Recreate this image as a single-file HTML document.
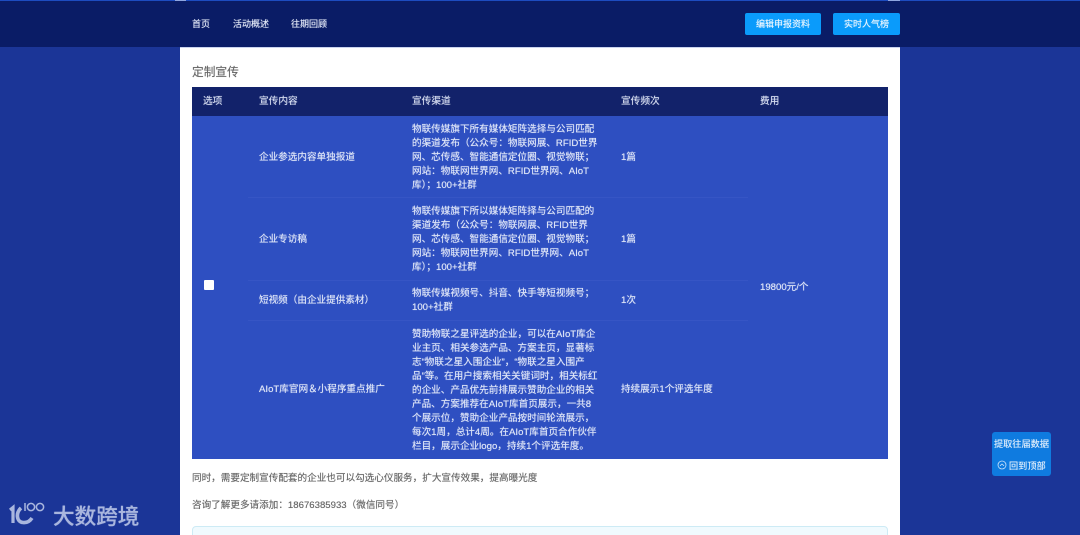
<!DOCTYPE html>
<html lang="zh">
<head>
<meta charset="utf-8">
<style>
html,body{margin:0;padding:0;width:1080px;height:535px;overflow:hidden;background:#1b3597;}
body{position:relative;font-family:"Liberation Sans","Noto Sans CJK SC",sans-serif;}
.a{position:absolute;white-space:nowrap;}
#hdr{left:0;top:0;width:1080px;height:47px;background:#0a1c66;border-top:1px solid #1d4cc0;box-sizing:border-box;}
#main{left:180px;top:47px;width:720px;height:488px;background:#fff;border-top:1px solid #c9d3ee;box-sizing:border-box;}
.nav{top:18px;font-size:9px;line-height:13px;color:#dfe5f5;text-shadow:0 0 .6px #dfe5f5;}
.btn{top:13px;height:22px;background:#0a9bfb;border-radius:2px;color:#e6f4ff;font-size:9px;line-height:23px;text-align:center;text-shadow:0 0 .6px #e6f4ff;}
#th{left:192px;top:87px;width:696px;height:29px;background:#12226a;}
#tb{left:192px;top:116px;width:696px;height:343px;background:#2e4fc1;}
.h{top:95px;font-size:9.7px;line-height:14px;color:#d5dcf0;text-shadow:0 0 .6px #d5dcf0;}
.t{font-size:9.6px;line-height:14px;color:#dde4f7;text-shadow:0 0 .6px #dde4f7;}
.line{left:248px;width:500px;height:1px;background:#3655c5;}
.p{left:192px;font-size:9.6px;line-height:13px;color:#666;text-shadow:0 0 .5px #888;}
</style>
</head>
<body>
<div class="a" id="hdr"></div>
<div class="a" style="left:175px;top:0;width:11px;height:1px;background:#8fa6e0"></div>
<div class="a" style="left:888px;top:0;width:12px;height:1px;background:#8fa6e0"></div>
<div class="a nav" style="left:192px">首页</div>
<div class="a nav" style="left:233px">活动概述</div>
<div class="a nav" style="left:291px">往期回顾</div>
<div class="a btn" style="left:745px;width:76px">编辑申报资料</div>
<div class="a btn" style="left:833px;width:67px">实时人气榜</div>

<div class="a" id="main"></div>
<div class="a" style="left:192px;top:65px;font-size:11.7px;line-height:16px;color:#666;text-shadow:0 0 .5px #888">定制宣传</div>

<div class="a" id="th"></div>
<div class="a" id="tb"></div>
<div class="a h" style="left:203px">选项</div>
<div class="a h" style="left:259px">宣传内容</div>
<div class="a h" style="left:412px">宣传渠道</div>
<div class="a h" style="left:621px">宣传频次</div>
<div class="a h" style="left:760px">费用</div>

<div class="a line" style="top:197px"></div>
<div class="a line" style="top:280px"></div>
<div class="a line" style="top:320px"></div>

<div class="a" style="left:204px;top:280px;width:10px;height:10px;background:#fff;border-radius:1px"></div>

<div class="a t" style="left:259px;top:151px">企业参选内容单独报道</div>
<div class="a t" style="left:259px;top:233px">企业专访稿</div>
<div class="a t" style="left:259px;top:294px">短视频（由企业提供素材）</div>
<div class="a t" style="left:259px;top:383px">AIoT库官网＆小程序重点推广</div>

<div class="a t" style="left:412px;top:123px">物联传媒旗下所有媒体矩阵选择与公司匹配<br>的渠道发布（公众号：物联网展、RFID世界<br>网、芯传感、智能通信定位圈、视觉物联；<br>网站：物联网世界网、RFID世界网、AIoT<br>库）；100+社群</div>
<div class="a t" style="left:412px;top:205px">物联传媒旗下所以媒体矩阵择与公司匹配的<br>渠道发布（公众号：物联网展、RFID世界<br>网、芯传感、智能通信定位圈、视觉物联；<br>网站：物联网世界网、RFID世界网、AIoT<br>库）；100+社群</div>
<div class="a t" style="left:412px;top:287px">物联传媒视频号、抖音、快手等短视频号；<br>100+社群</div>
<div class="a t" style="left:412px;top:328px">赞助物联之星评选的企业，可以在AIoT库企<br>业主页、相关参选产品、方案主页，显著标<br>志“物联之星入围企业”，“物联之星入围产<br>品”等。在用户搜索相关关键词时，相关标红<br>的企业、产品优先前排展示赞助企业的相关<br>产品、方案推荐在AIoT库首页展示，一共8<br>个展示位，赞助企业产品按时间轮流展示，<br>每次1周，总计4周。在AIoT库首页合作伙伴<br>栏目，展示企业logo，持续1个评选年度。</div>

<div class="a t" style="left:621px;top:151px">1篇</div>
<div class="a t" style="left:621px;top:233px">1篇</div>
<div class="a t" style="left:621px;top:294px">1次</div>
<div class="a t" style="left:621px;top:383px">持续展示1个评选年度</div>
<div class="a t" style="left:760px;top:281px">19800元/个</div>

<div class="a p" style="top:472px">同时，需要定制宣传配套的企业也可以勾选心仪服务，扩大宣传效果，提高曝光度</div>
<div class="a p" style="top:499px">咨询了解更多请添加：18676385933（微信同号）</div>

<div class="a" style="left:192px;top:526px;width:696px;height:20px;background:#f0fafe;border:1px solid #cdebf5;border-radius:4px;box-sizing:border-box"></div>

<div class="a" style="left:992px;top:432px;width:59px;height:44px;background:#0f7be0;border-radius:3px"></div>
<div class="a" style="left:992px;top:438px;width:59px;text-align:center;font-size:9.2px;line-height:13px;color:#dcecfb;text-shadow:0 0 .5px #dcecfb">提取往届数据</div>
<div class="a" style="left:1009px;top:460px;font-size:9.2px;line-height:13px;color:#dcecfb;text-shadow:0 0 .5px #dcecfb">回到顶部</div>
<svg class="a" style="left:997px;top:460px" width="10" height="10" viewBox="0 0 10 10" fill="none" stroke="#cfe4fa" stroke-width=".8"><circle cx="5" cy="5" r="4"/><path d="M3 5.8 L5 4 L7 5.8"/></svg>

<svg class="a" style="left:8px;top:500px" width="42" height="30" viewBox="0 0 42 30" fill="none" stroke="#a9b6de">
<path d="M2 10 L5 7.5 V23" stroke-width="3.2"/>
<path d="M13 8 C7.5 13 8.5 22 15 22.5 C19 23 22 21 24 18" stroke-width="3.6"/>
<path d="M17 3 V11" stroke-width="1.5"/>
<circle cx="23" cy="7" r="3.6" stroke-width="1.5"/>
<circle cx="32" cy="7" r="3.6" stroke-width="1.5"/>
</svg>
<div class="a" style="left:53px;top:504px;font-size:21.6px;line-height:26px;color:#a9b6de;font-weight:500;text-shadow:0 0 .7px #a9b6de">大数跨境</div>
</body>
</html>
